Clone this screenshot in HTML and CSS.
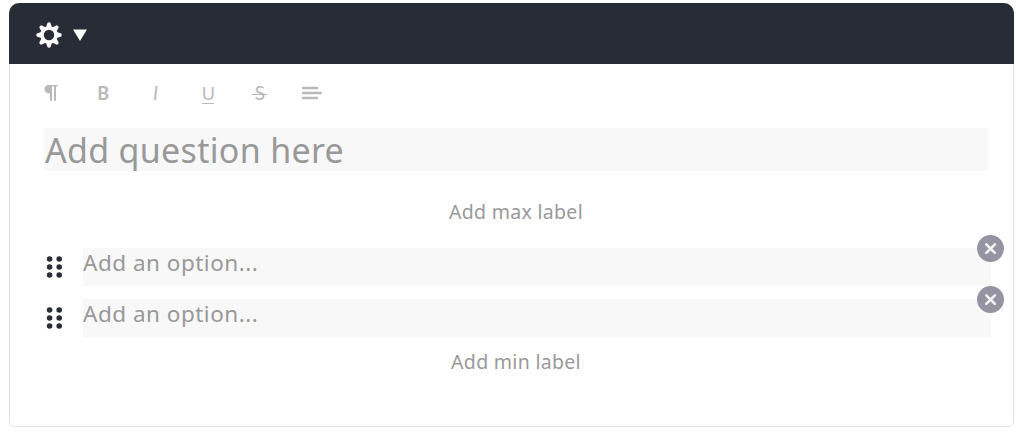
FILE: index.html
```
<!DOCTYPE html>
<html lang="en">
<head>
  <meta charset="UTF-8">
  <title>Question editor</title>
  <link rel="stylesheet" href="styles.css">
</head>
<body>
  <div class="card">
    <div class="card-header">
      <svg class="gear" width="28" height="28" viewBox="-14 -14 28 28">
        <g fill="#fafafa">
          <path id="tooth" d="M-3.2 -7 L-1.5 -12.3 Q0 -13.2 1.5 -12.3 L3.2 -7 Z"/>
          <use href="#tooth" transform="rotate(45)"/>
          <use href="#tooth" transform="rotate(90)"/>
          <use href="#tooth" transform="rotate(135)"/>
          <use href="#tooth" transform="rotate(180)"/>
          <use href="#tooth" transform="rotate(225)"/>
          <use href="#tooth" transform="rotate(270)"/>
          <use href="#tooth" transform="rotate(315)"/>
        </g>
        <circle r="7" fill="#282c37" stroke="#fafafa" stroke-width="3.6"/>
      </svg>
      <svg class="caret" width="14" height="12" viewBox="0 0 14 12">
        <path d="M0 0.6 H14 L7 12 Z" fill="#fafafa"/>
      </svg>
    </div>
    <div class="card-body">
      <div class="toolbar">
        <span class="tool">
          <svg width="14" height="18" viewBox="0 0 14 18">
            <path d="M4.6 1 H13.6 V2.5 H12 V16.8 H10 V2.5 H8 V16.8 H6 V9.3 H4.6 A4.15 4.15 0 0 1 4.6 1 Z" fill="#b9b9b9"/>
          </svg>
        </span>
        <span class="tool bold">B</span>
        <span class="tool italic">I</span>
        <span class="tool"><span class="underline">U</span></span>
        <span class="tool"><span class="strike">S</span></span>
        <span class="tool">
          <svg width="20" height="14" viewBox="0 0 20 14">
            <path d="M1 2 H15 M1 7 H19 M1 12 H15" stroke="#b9b9b9" stroke-width="2.5" stroke-linecap="round"/>
          </svg>
        </span>
      </div>
      <div class="question">Add question here</div>
      <div class="label max">Add max label</div>
      <div class="option">
        <svg class="handle" width="16" height="22" viewBox="0 0 16 22">
          <g fill="#282c37">
            <circle cx="3.6" cy="3" r="2.8"/><circle cx="13.2" cy="3" r="2.8"/>
            <circle cx="3.6" cy="11" r="2.8"/><circle cx="13.2" cy="11" r="2.8"/>
            <circle cx="3.6" cy="19" r="2.8"/><circle cx="13.2" cy="19" r="2.8"/>
          </g>
        </svg>
        <div class="option-text">Add an option...</div>
        <svg class="remove" width="27" height="27" viewBox="0 0 27 27">
          <circle cx="13.5" cy="13.5" r="13.5" fill="#9494a2"/>
          <path d="M9.3 9.3 L17.9 17.9 M17.9 9.3 L9.3 17.9" stroke="#f4f4f6" stroke-width="2.6" stroke-linecap="round"/>
        </svg>
      </div>
      <div class="option">
        <svg class="handle" width="16" height="22" viewBox="0 0 16 22">
          <g fill="#282c37">
            <circle cx="3.6" cy="3" r="2.8"/><circle cx="13.2" cy="3" r="2.8"/>
            <circle cx="3.6" cy="11" r="2.8"/><circle cx="13.2" cy="11" r="2.8"/>
            <circle cx="3.6" cy="19" r="2.8"/><circle cx="13.2" cy="19" r="2.8"/>
          </g>
        </svg>
        <div class="option-text">Add an option...</div>
        <svg class="remove" width="27" height="27" viewBox="0 0 27 27">
          <circle cx="13.5" cy="13.5" r="13.5" fill="#9494a2"/>
          <path d="M9.3 9.3 L17.9 17.9 M17.9 9.3 L9.3 17.9" stroke="#f4f4f6" stroke-width="2.6" stroke-linecap="round"/>
        </svg>
      </div>
      <div class="label min">Add min label</div>
    </div>
  </div>
</body>
</html>
```

FILE: styles.css
```
* {
  box-sizing: border-box;
}

body {
  margin: 0;
  background-color: #fff;
  font-family: "Noto Sans", "Open Sans", sans-serif;
  color: #999;
}

.card {
  width: 1005px;
  height: 424px;
  margin: 3px 0 0 9px;
  border-radius: 10px 10px 5px 5px;
  overflow: hidden;
  display: flex;
  flex-direction: column;
}

.card-header {
  height: 61px;
  background-color: #282c37;
  display: flex;
  align-items: center;
  padding: 3px 0 0 26px;
}

.caret {
  margin-left: 10px;
}

.card-body {
  flex: 1;
  border: 1px solid #e1e1e1;
  border-top: none;
  border-radius: 0 0 5px 5px;
}

.toolbar {
  display: flex;
  height: 60px;
  padding-left: 15px;
}

.tool {
  width: 52.2px;
  height: 58px;
  display: flex;
  align-items: center;
  justify-content: center;
  font-family: Lato, "Noto Sans", sans-serif;
  font-size: 19px;
  line-height: 20px;
  color: #b9b9b9;
}

.bold {
  font-weight: bold;
  font-size: 18px;
}

.italic {
  font-style: italic;
}

.underline {
  height: 20px;
  margin-top: 1px;
  border-bottom: 1px solid #b9b9b9;
  font-size: 18px;
  line-height: 18px;
}

.underline,
.strike {
  width: 12px;
  text-align: center;
}

.strike {
  width: 15px;
  background: linear-gradient(#b9b9b9, #b9b9b9) 0 11px / 100% 1px no-repeat;
}

.question {
  height: 43px;
  margin: 4px 25px 0 34px;
  padding-left: 1px;
  background-color: #f8f8f8;
  border-radius: 2px;
  font-size: 34px;
  line-height: 44px;
  letter-spacing: 0.3px;
}

.label {
  height: 28px;
  padding-left: 9px;
  font-size: 19.5px;
  line-height: 28px;
  letter-spacing: 0.3px;
  text-align: center;
}

.max {
  margin-top: 27px;
}

.option {
  position: relative;
  height: 38px;
  margin: 22px 22px 0 36px;
  display: flex;
  align-items: center;
}

.option + .option {
  margin-top: 13px;
}

.handle {
  margin-right: 21px;
}

.option-text {
  flex: 1;
  height: 38px;
  background-color: #f8f8f8;
  font-size: 22.5px;
  line-height: 29px;
  letter-spacing: 0.5px;
}

/* sits over the top right corner of the option */
.remove {
  position: absolute;
  top: -13px;
  right: -13px;
}

.min {
  margin-top: 11px;
}
```
